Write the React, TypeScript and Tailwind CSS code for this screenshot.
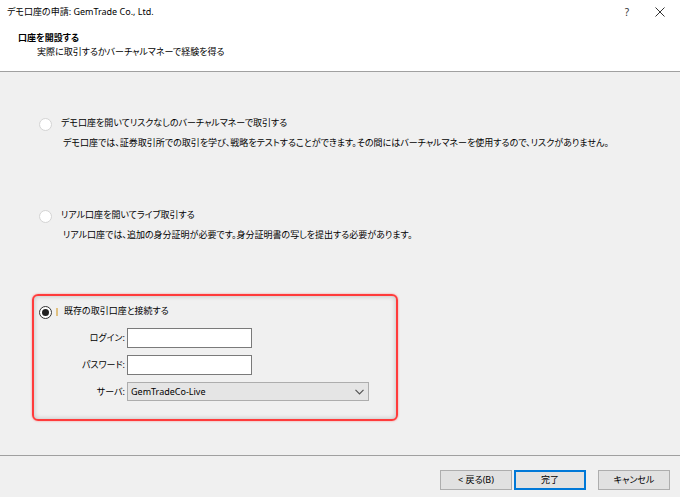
import React from 'react';

const font = "font-['Noto_Sans','Noto_Sans_CJK_JP',sans-serif] [font-feature-settings:'palt']";
const txt = 'text-[9px] leading-[14px] text-black';

function Radio({ checked = false }: { checked?: boolean }) {
  return checked ? (
    <span className="w-[13px] h-[13px] rounded-full border border-[#333] bg-white flex items-center justify-center shrink-0">
      <span className="block w-[7px] h-[7px] rounded-full bg-[#222]" />
    </span>
  ) : (
    <span className="block w-[13px] h-[13px] rounded-full border border-[#d4d4d4] bg-white shrink-0" />
  );
}

function Option({ title, desc }: { title: string; desc: string }) {
  return (
    <div className="flex flex-col">
      <div className="flex items-center h-[14px]">
        <div className="w-[39px]" />
        <div className="mt-[3px]">
          <Radio />
        </div>
        <span className={`ml-[9px] ${txt}`}>{title}</span>
      </div>
      <div className={`pl-[63px] mt-[6px] h-[14px] whitespace-nowrap ${txt}`}>{desc}</div>
    </div>
  );
}

export default function App() {
  return (
    <div className={`w-[680px] h-[497px] flex flex-col bg-[#f0f0f0] overflow-hidden ${font}`}>
      {/* Header */}
      <div className="h-[72px] bg-white border-b border-[#a0a0a0] flex flex-col shrink-0">
        <div className="h-[24px] flex items-center">
          <span className="pl-[7px] flex-1 text-[9px] leading-[14px] text-black">デモ口座の申請: GemTrade Co., Ltd.</span>
          <span className="w-[20px] text-center text-[10px] leading-[14px] text-[#333]">?</span>
          <div className="w-[18px]" />
          <svg width="10" height="10" viewBox="0 0 10 10" className="mr-[15px]">
            <path d="M0.5 0.5 L9.5 9.5 M9.5 0.5 L0.5 9.5" stroke="#333" strokeWidth="1" />
          </svg>
        </div>
        <div className="mt-[7px] pl-[18px] h-[14px] text-[9px] leading-[14px] font-bold text-black">口座を開設する</div>
        <div className="pl-[37px] h-[14px] text-[9px] leading-[14px] text-black">実際に取引するかバーチャルマネーで経験を得る</div>
      </div>

      {/* Body */}
      <div className="flex-1 flex flex-col">
        <div className="mt-[44px]">
          <Option
            title="デモ口座を開いてリスクなしのバーチャルマネーで取引する"
            desc="デモ口座では、証券取引所での取引を学び、戦略をテストすることができます。その間にはバーチャルマネーを使用するので、リスクがありません。"
          />
        </div>
        <div className="mt-[58px]">
          <Option
            title="リアル口座を開いてライブ取引する"
            desc="リアル口座では、追加の身分証明が必要です。身分証明書の写しを提出する必要があります。"
          />
        </div>

        <div className="ml-[32px] mt-[52px] w-[366px] h-[127px] border-2 border-[#ff3b3b] rounded-[6px] shadow-[inset_0_0_5px_rgba(0,0,0,0.22),0_0_2px_rgba(255,60,60,0.6)] flex flex-col">
          <div className="mt-[8px] flex items-center h-[14px]">
            <div className="w-[5px]" />
            <div className="mt-[2px]">
              <Radio checked />
            </div>
            <span className="block ml-[4px] w-[2px] h-[8px] bg-[#e0c080] mt-[2px]" />
            <span className={`ml-[6px] ${txt}`}>既存の取引口座と接続する</span>
          </div>

          <div className="mt-[10px] grid grid-cols-[91px_auto] gap-x-[2px] gap-y-[7px] items-center">
            <span className={`text-right ${txt}`}>ログイン:</span>
            <div className="w-[125px] h-[20px] bg-white border border-[#7a7a7a]" />
            <span className={`text-right ${txt}`}>パスワード:</span>
            <div className="w-[125px] h-[20px] bg-white border border-[#7a7a7a]" />
            <span className={`text-right ${txt}`}>サーバ:</span>
            <div className="w-[242px] h-[19px] bg-[#e5e5e5] border border-[#adadad] flex items-center pl-[3px] pr-[4px]">
              <span className="flex-1 text-[9px] leading-[14px] text-black">GemTradeCo-Live</span>
              <svg width="9" height="6" viewBox="0 0 9 6">
                <path d="M0.5 0.8 L4.5 4.8 L8.5 0.8" stroke="#555" strokeWidth="1.2" fill="none" />
              </svg>
            </div>
          </div>
        </div>
      </div>

      {/* Footer */}
      <div className="h-[42px] border-t border-[#a0a0a0] shrink-0 flex items-start justify-end pt-[14px] pr-[10px]">
        <button className="w-[72px] h-[20px] bg-[#e1e1e1] border border-[#adadad] text-[9px] leading-[14px] text-black">&lt; 戻る(B)</button>
        <button className="ml-[2px] w-[72px] h-[20px] bg-[#e1e1e1] border border-[#0078d7] shadow-[inset_0_0_0_1px_#0078d7] text-[9px] leading-[14px] text-black">完了</button>
        <button className="ml-[12px] w-[72px] h-[20px] bg-[#e1e1e1] border border-[#adadad] text-[9px] leading-[14px] text-black">キャンセル</button>
      </div>
    </div>
  );
}
